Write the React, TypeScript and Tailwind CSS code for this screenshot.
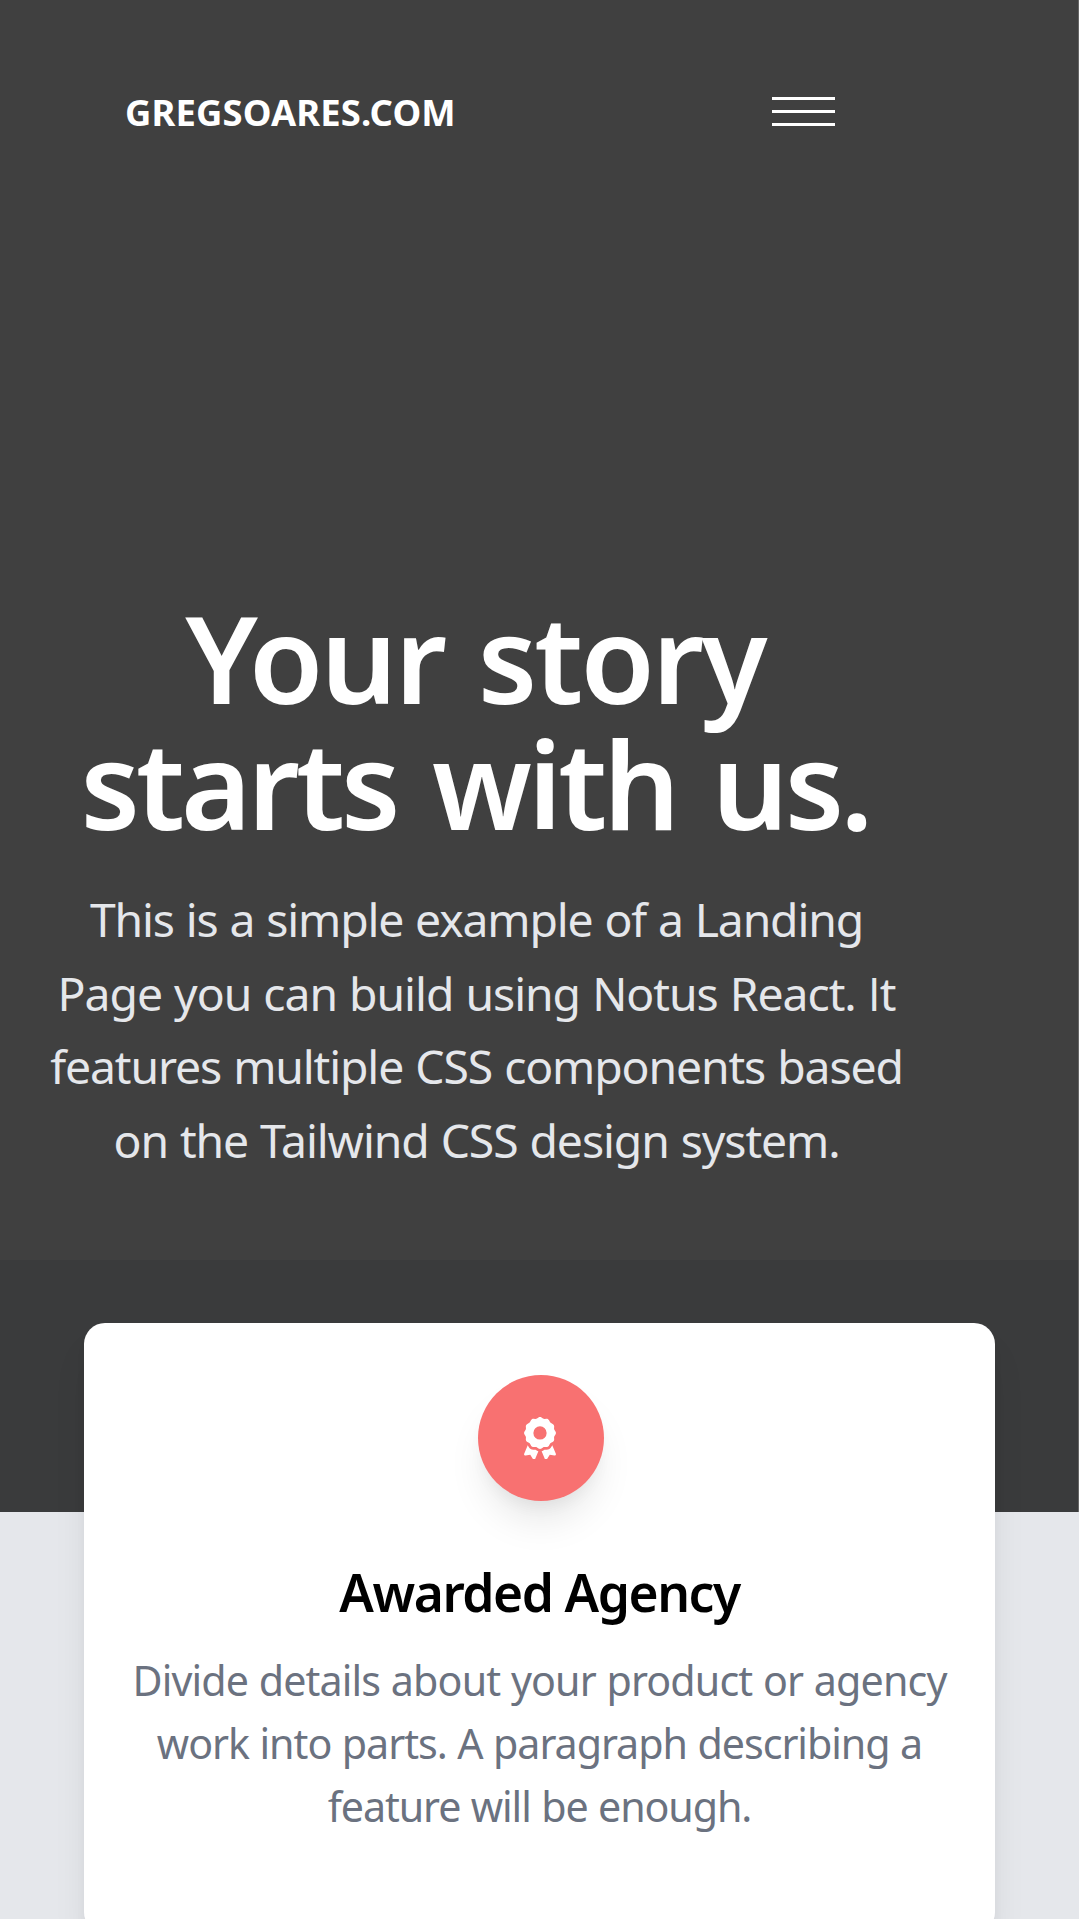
import { FaAward } from "react-icons/fa6";

export default function App() {
  return (
    <div className="flex h-[1919px] w-[1079px] flex-col overflow-hidden bg-[#e5e7eb] font-['Noto_Sans','Open_Sans',sans-serif]">
      <header className="h-[1260px] shrink-0 border-r border-[#666666] bg-[#404040]">
        <nav className="flex h-[223px] items-start pl-[125px] pt-[81px]">
          <a className="mt-px w-[647px] whitespace-nowrap text-[36.4px] font-bold leading-[60px] tracking-[0.15px] text-white">
            GREGSOARES.COM
          </a>
          <button className="mt-4 flex flex-col gap-[10.4px]" aria-label="Menu">
            <span className="block h-[2.6px] w-[63px] bg-white" />
            <span className="block h-[2.6px] w-[63px] bg-white" />
            <span className="block h-[2.6px] w-[63px] bg-white" />
          </button>
        </nav>
        <div className="mt-[371px] w-[953px] whitespace-nowrap text-center">
          <h1 className="pr-[3px] text-[120.5px] font-semibold leading-[126px] text-white">
            <span className="block tracking-[-2.8px] [word-spacing:5px]">Your story</span>
            <span className="block tracking-[-3.9px] [word-spacing:8px]">starts with us.</span>
          </h1>
          <p className="mt-[37px] text-[46.3px] leading-[73.5px] text-[#e5e7eb]">
            <span className="block tracking-[-1.147px] [word-spacing:1px]">This is a simple example of a Landing</span>
            <span className="block tracking-[-1.04px] [word-spacing:1.1px]">
              Page you can build using Notus React. <span className="font-['Open_Sans']">I</span>t
            </span>
            <span className="block tracking-[-1.13px] [word-spacing:1.25px]">features multiple CSS components based</span>
            <span className="block tracking-[-1.1px] [word-spacing:1.1px]">on the Tailwind CSS design system.</span>
          </p>
        </div>
      </header>
      <div className="h-[252px] shrink-0 border-r border-[#666666] bg-[#3a3b3c]" />
      <section className="relative z-10 -mt-[189px] ml-[84px] flex h-[610px] w-[911px] shrink-0 flex-col items-center whitespace-nowrap rounded-[21px] bg-white pt-[52.25px] text-center shadow-[0_26px_39px_-8px_rgba(0,0,0,0.1),0_10px_16px_-5px_rgba(0,0,0,0.05)]">
        <div className="ml-[2px] flex size-[126px] items-center justify-center rounded-full bg-[#f87171] text-white shadow-[0_26px_39px_-8px_rgba(0,0,0,0.1),0_10px_16px_-5px_rgba(0,0,0,0.05)]">
          <FaAward className="mb-px mr-[2px] h-[42.5px] w-[32px]" />
        </div>
        <h6 className="mt-[54.5px] text-[51.5px] font-semibold leading-[72px] tracking-[-1.44px] text-black">
          Awarded Agency
        </h6>
        <p className="mt-[21.5px] text-[41.2px] leading-[63px] text-[#6b7280]">
          <span className="block tracking-[-0.86px] [word-spacing:0.8px]">Divide details about your product or agency</span>
          <span className="block tracking-[-1.03px] [word-spacing:0.85px]">work into parts. A paragraph describing a</span>
          <span className="block tracking-[-1.09px] [word-spacing:0.85px]">feature will be enough.</span>
        </p>
      </section>
    </div>
  );
}
